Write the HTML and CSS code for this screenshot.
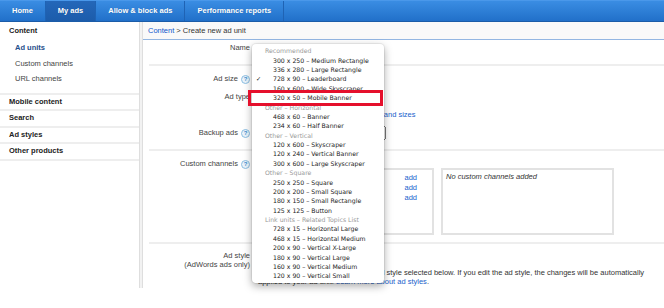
FILE: index.html
```html
<!DOCTYPE html>
<html lang="en">
<head>
    <meta charset="UTF-8">
    <meta name="viewport" content="width=device-width, initial-scale=1.0">
    <title>Create new ad unit</title>
    <link rel="stylesheet" href="styles.css">
</head>
<body>
    <div class="topnav">
        <a class="tab">Home</a>
        <a class="tab selected">My ads</a>
        <a class="tab">Allow &amp; block ads</a>
        <a class="tab">Performance reports</a>
    </div>

    <div class="page">
        <div class="sidebar">
            <div class="side-links">
                <div class="side-head">Content</div>
                <a class="side-link current">Ad units</a>
                <a class="side-link">Custom channels</a>
                <a class="side-link">URL channels</a>
            </div>
            <div class="side-section">Mobile content</div>
            <div class="side-section">Search</div>
            <div class="side-section">Ad styles</div>
            <div class="side-section">Other products</div>
        </div>

        <div class="main">
            <div class="crumbs"><a>Content</a> &gt; Create new ad unit</div>

            <div class="form">
                <div class="section first">
                    <div class="label">Name</div>
                    <div class="field"><input type="text" class="text-input"></div>
                </div>

                <div class="section tall">
                    <div class="label">Ad size <span class="help">?</span></div>
                    <div class="field"><select class="select size-select"><option>728 x 90 - Leaderboard</option></select></div>
                    <div class="label">Ad type</div>
                    <div class="field">Text &amp; image ads</div>
                    <div class="label"></div>
                    <div class="field"><a class="more-link"><span class="info">i</span>Learn more about all the ad types and sizes</a></div>
                    <div class="label">Backup ads <span class="help">?</span></div>
                    <div class="field"><select class="select"><option>Show blank space</option></select></div>
                </div>

                <div class="section channels">
                    <div class="label">Custom channels <span class="help">?</span></div>
                    <div class="field">
                        <div class="channel-boxes">
                            <div class="channel-box">
                                <div class="channel-row"><span>Homepage</span><a>add</a></div>
                                <div class="channel-row"><span>Sidebar</span><a>add</a></div>
                                <div class="channel-row"><span>Footer</span><a>add</a></div>
                            </div>
                            <div class="channel-box selected-box"><em>No custom channels added</em></div>
                        </div>
                    </div>
                </div>

                <div class="section last">
                    <div class="label">Ad style<br>(AdWords ads only)</div>
                    <div class="field">
                        <select class="select style-select"><option>Default Google style</option></select>
                        <p class="note">This ad unit will be displayed in the ad style selected below. If you edit the ad style, the changes will be automatically applied to your ad unit. <a>Learn more about ad styles</a>.</p>
                    </div>
                </div>
            </div>
        </div>
    </div>

    <div class="size-menu">
        <div class="menu-group">Recommended</div>
        <div class="menu-item">300 x 250 – Medium Rectangle</div>
        <div class="menu-item">336 x 280 – Large Rectangle</div>
        <div class="menu-item checked">728 x 90 – Leaderboard</div>
        <div class="menu-item">160 x 600 – Wide Skyscraper</div>
        <div class="menu-item">320 x 50 – Mobile Banner</div>
        <div class="menu-group">Other – Horizontal</div>
        <div class="menu-item">468 x 60 – Banner</div>
        <div class="menu-item">234 x 60 – Half Banner</div>
        <div class="menu-group">Other – Vertical</div>
        <div class="menu-item">120 x 600 – Skyscraper</div>
        <div class="menu-item">120 x 240 – Vertical Banner</div>
        <div class="menu-item">300 x 600 – Large Skyscraper</div>
        <div class="menu-group">Other – Square</div>
        <div class="menu-item">250 x 250 – Square</div>
        <div class="menu-item">200 x 200 – Small Square</div>
        <div class="menu-item">180 x 150 – Small Rectangle</div>
        <div class="menu-item">125 x 125 – Button</div>
        <div class="menu-group">Link units – Related Topics List</div>
        <div class="menu-item">728 x 15 – Horizontal Large</div>
        <div class="menu-item">468 x 15 – Horizontal Medium</div>
        <div class="menu-item">200 x 90 – Vertical X-Large</div>
        <div class="menu-item">180 x 90 – Vertical Large</div>
        <div class="menu-item">160 x 90 – Vertical Medium</div>
        <div class="menu-item">120 x 90 – Vertical Small</div>
    </div>
    <div class="callout"></div>
</body>
</html>
```

FILE: styles.css
```css
body {
    margin: 0;
    font-family: "Liberation Sans", Arial, sans-serif;
    font-size: 7.5px;
    color: #444;
    background: #fff;
}
a {
    color: #1a5fcc;
    text-decoration: none;
    cursor: pointer;
}

/* top tabs */
.topnav {
    display: flex;
    height: 22px;
    box-sizing: border-box;
    background: linear-gradient(#3a8de3, #2170c9);
    border-top: 1px solid #4a98ea;
    border-bottom: 1px solid #1b5ca8;
}
.tab {
    padding: 0 12px;
    line-height: 20px;
    color: #fff;
    font-weight: bold;
    border-right: 1px solid #1f63b4;
    text-shadow: 0 0 1px rgba(0, 0, 0, 0.2);
}
.tab.selected {
    background: linear-gradient(#2467b9, #1c5cab);
}

/* page columns */
.page {
    display: flex;
    height: 266px;
    background: #f2f2f2;
}
.sidebar {
    width: 139px;
    background: #fff;
    border-right: 1px solid #dedede;
}
.main {
    flex: 1;
    margin-left: 2px;
    background: #fff;
    border-left: 1px solid #dedede;
}

/* sidebar */
.side-links {
    padding-bottom: 6px;
    border-bottom: 2px solid #eee;
}
.side-head {
    padding-left: 9px;
    line-height: 18px;
    font-weight: bold;
    color: #222;
}
.side-link {
    display: block;
    padding-left: 15px;
    line-height: 15.5px;
    color: #444;
}
.side-link.current {
    color: #1f4f8c;
    font-weight: bold;
}
.side-section {
    padding-left: 9px;
    line-height: 14.5px;
    font-weight: bold;
    color: #222;
    border-bottom: 2px solid #eee;
}

/* breadcrumb */
.crumbs {
    height: 17px;
    line-height: 17px;
    padding-left: 5px;
    background: #f9f9f9;
    border-bottom: 1px solid #93b6e2;
    color: #333;
}
.crumbs a {
    color: #1155cc;
}

/* form */
.form {
    padding-left: 6px;
}
.section {
    display: grid;
    grid-template-columns: 101px 1fr;
    column-gap: 8px;
    border-bottom: 2px solid #eee;
}
.label {
    text-align: right;
    line-height: 9px;
    color: #444;
}
.section.first {
    padding: 3px 0 6px;
}
.section.first .text-input {
    margin-top: 1px;
}
.section.tall {
    grid-auto-rows: 18px;
    padding: 4px 0 7px;
}
.section.tall .label,
.section.tall .field {
    line-height: 18px;
}
.section.channels {
    padding: 8px 0 7px;
}
.section.last {
    padding-top: 6.5px;
    border-bottom: none;
}
.text-input {
    display: block;
    width: 112px;
    height: 14px;
    box-sizing: border-box;
    border: 1px solid #ccc;
}
.select {
    width: 128px;
    height: 14px;
    font-size: 7px;
    vertical-align: middle;
}
.size-select {
    width: 122px;
}
.style-select {
    display: block;
    width: 120px;
    height: 12px;
    margin-bottom: 5px;
}
.help {
    display: inline-block;
    width: 7px;
    height: 7px;
    line-height: 7px;
    border: 1px solid #8cbfe3;
    border-radius: 50%;
    background: #eaf4fb;
    color: #3c8fd0;
    font-size: 6px;
    font-weight: bold;
    text-align: center;
    vertical-align: middle;
    margin-left: 1px;
}
.info {
    display: inline-block;
    width: 8px;
    height: 8px;
    line-height: 8px;
    margin-right: 4px;
    border-radius: 50%;
    background: #5b9bd5;
    color: #fff;
    font-size: 6px;
    text-align: center;
}

/* custom channels */
.channel-boxes {
    display: flex;
    gap: 7px;
    margin-top: 9px;
}
.channel-box {
    width: 176px;
    height: 67px;
    box-sizing: border-box;
    border: 2px solid #e2e2e2;
    padding: 3px 15px 0 4px;
}
.channel-row {
    display: flex;
    justify-content: space-between;
    line-height: 10px;
}
.selected-box {
    width: 173px;
    padding: 2px 3px;
    line-height: 9px;
    color: #333;
}

.note {
    margin: 0;
    line-height: 9px;
    color: #333;
}

/* open size dropdown */
.size-menu {
    position: absolute;
    left: 252px;
    top: 44px;
    width: 132px;
    padding: 2.3px 0;
    background: #fff;
    border-radius: 4px;
    box-shadow: 0 3px 8px rgba(0, 0, 0, 0.35), 0 0 0 1px rgba(0, 0, 0, 0.06);
    font-family: "DejaVu Sans", sans-serif;
    font-size: 6.2px;
    line-height: 9.375px;
    color: #1a1a1a;
    white-space: nowrap;
}
.menu-group {
    padding-left: 13px;
    color: #999;
}
.menu-item {
    position: relative;
    padding-left: 21px;
}
.menu-item.checked::before {
    content: "✓";
    position: absolute;
    left: 4px;
}
.callout {
    position: absolute;
    left: 248px;
    top: 90px;
    width: 135px;
    height: 16px;
    box-sizing: border-box;
    border: 3px solid #e5102c;
}
```
